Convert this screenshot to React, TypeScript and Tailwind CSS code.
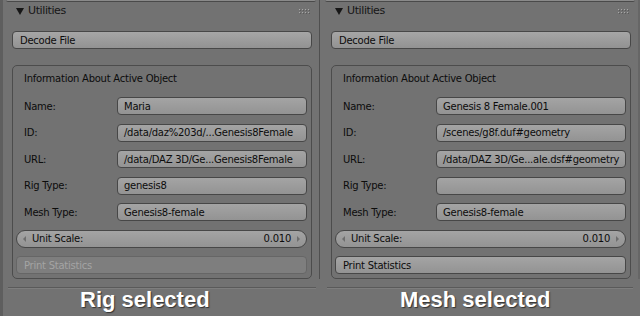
type Info = {
  name: string;
  id: string;
  url: string;
  rig: string;
  mesh: string;
};

type PanelProps = {
  info: Info;
  caption: string;
  statsEnabled: boolean;
  colClass: string;
  topClass: string;
  lineClass: string;
  captionClass: string;
};

function Grip() {
  return (
    <svg width="11" height="5" viewBox="0 0 11 5">
      {[0, 3, 6, 9].map((x) =>
        [0, 3].map((y) => (
          <g key={`${x}-${y}`}>
            <rect x={x + 1} y={y + 1} width="1" height="1" fill="#5a5a5a" />
            <rect x={x} y={y} width="1" height="1" fill="#a8a8a8" />
          </g>
        ))
      )}
    </svg>
  );
}

function Field({ label, value }: { label: string; value: string }) {
  return (
    <div className="flex items-center h-[18px]">
      <div className="w-[101px] pl-[8px] text-[#0c0c0c]">{label}</div>
      <div className="flex-1 h-full rounded-[4px] border border-[#474747] bg-gradient-to-b from-[#a4a4a4] to-[#939393] pl-[6px] flex items-center overflow-hidden whitespace-nowrap text-[#0c0c0c]">
        {value}
      </div>
    </div>
  );
}

function Panel({ info, caption, statsEnabled, colClass, topClass, lineClass, captionClass }: PanelProps) {
  return (
    <div className={colClass}>
      <div className={topClass}>
        {/* edge of the panel above */}
        <div className="ml-[-6px] w-[310px] h-[2px] bg-[#8a8a8a] border-b border-[#4a4a4a] rounded-b-[3px]"></div>

        {/* header */}
        <div className="w-[300px] h-[18px] flex items-center pl-[4px] pr-[2px]">
          <svg width="8" height="7" viewBox="0 0 8 7" className="mr-[4px]">
            <polygon points="0,0 8,0 4,7" fill="#161616" />
          </svg>
          <span className="text-[11px] tracking-[-0.4px] text-[#161616]">Utilities</span>
          <div className="ml-auto">
            <Grip />
          </div>
        </div>

        <button className="mt-[11px] w-[300px] h-[18px] rounded-[4px] border border-[#474747] bg-gradient-to-b from-[#a6a6a6] to-[#929292] text-left pl-[7px] text-[#0c0c0c]">
          Decode File
        </button>

        <div className="mt-[16px] w-[300px] border border-[#4c4c4c] rounded-[5px] pt-[5px] pl-[3px] pr-[4px] pb-[4px]">
          <div className="h-[14px] pl-[8px] flex items-center text-[#0c0c0c]">Information About Active Object</div>
          <div className="mt-[12px] flex flex-col gap-[8.5px]">
            <Field label="Name:" value={info.name} />
            <Field label="ID:" value={info.id} />
            <Field label="URL:" value={info.url} />
            <Field label="Rig Type:" value={info.rig} />
            <Field label="Mesh Type:" value={info.mesh} />

            <div className="h-[18px] rounded-full border border-[#474747] bg-gradient-to-b from-[#a4a4a4] to-[#939393] flex items-center px-[6px] text-[#0c0c0c]">
              <svg width="3" height="6" viewBox="0 0 3 6">
                <polygon points="3,0 0,3 3,6" fill="#6e6e6e" />
              </svg>
              <span className="ml-[6px]">Unit Scale:</span>
              <span className="ml-auto mr-[6px]">0.010</span>
              <svg width="3" height="6" viewBox="0 0 3 6">
                <polygon points="0,0 3,3 0,6" fill="#6e6e6e" />
              </svg>
            </div>

            {statsEnabled ? (
              <button className="h-[18px] rounded-[4px] border border-[#474747] bg-gradient-to-b from-[#a4a4a4] to-[#939393] text-left pl-[7px] text-[#0c0c0c]">
                Print Statistics
              </button>
            ) : (
              <button className="h-[18px] rounded-[4px] border border-[#666666] bg-[#7e7e7e] text-left pl-[7px] text-[#a4a4a4]">
                Print Statistics
              </button>
            )}
          </div>
        </div>
      </div>

      <div className={lineClass}></div>
      <div className={captionClass}>{caption}</div>
    </div>
  );
}

export default function App() {
  return (
    <div className="w-[640px] h-[316px] bg-[#727272] flex overflow-hidden font-['DejaVu_Sans',sans-serif] text-[10px] tracking-[-0.25px]">
      <Panel
        info={{
          name: "Maria",
          id: "/data/daz%203d/...Genesis8Female",
          url: "/data/DAZ 3D/Ge...Genesis8Female",
          rig: "genesis8",
          mesh: "Genesis8-female",
        }}
        caption="Rig selected"
        statsEnabled={false}
        colClass="w-[319px] h-full border-l-[3px] border-[#5e5e5e] flex flex-col"
        topClass="pl-[9px] flex flex-col"
        lineClass="mt-[8px] ml-[5px] w-[308px] h-[2px] border-t border-[#5a5a5a] bg-[#7e7e7e]"
        captionClass="pl-[77px] leading-[22px] font-['Liberation_Sans',Arial,sans-serif] font-bold text-[22px] tracking-normal text-white [text-shadow:1px_1px_1px_#333333]"
      />
      <Panel
        info={{
          name: "Genesis 8 Female.001",
          id: "/scenes/g8f.duf#geometry",
          url: "/data/DAZ 3D/Ge...ale.dsf#geometry",
          rig: "",
          mesh: "Genesis8-female",
        }}
        caption="Mesh selected"
        statsEnabled={true}
        colClass="w-[321px] h-full flex flex-col"
        topClass="pl-[11px] border-l border-r-[2px] border-l-[#4f4f4f] border-r-[#666666] flex flex-col"
        lineClass="mt-[8px] ml-[8px] w-[306px] h-[2px] border-t border-[#5a5a5a] bg-[#7e7e7e]"
        captionClass="pl-[81px] leading-[22px] font-['Liberation_Sans',Arial,sans-serif] font-bold text-[22px] tracking-normal text-white [text-shadow:1px_1px_1px_#333333]"
      />
    </div>
  );
}
